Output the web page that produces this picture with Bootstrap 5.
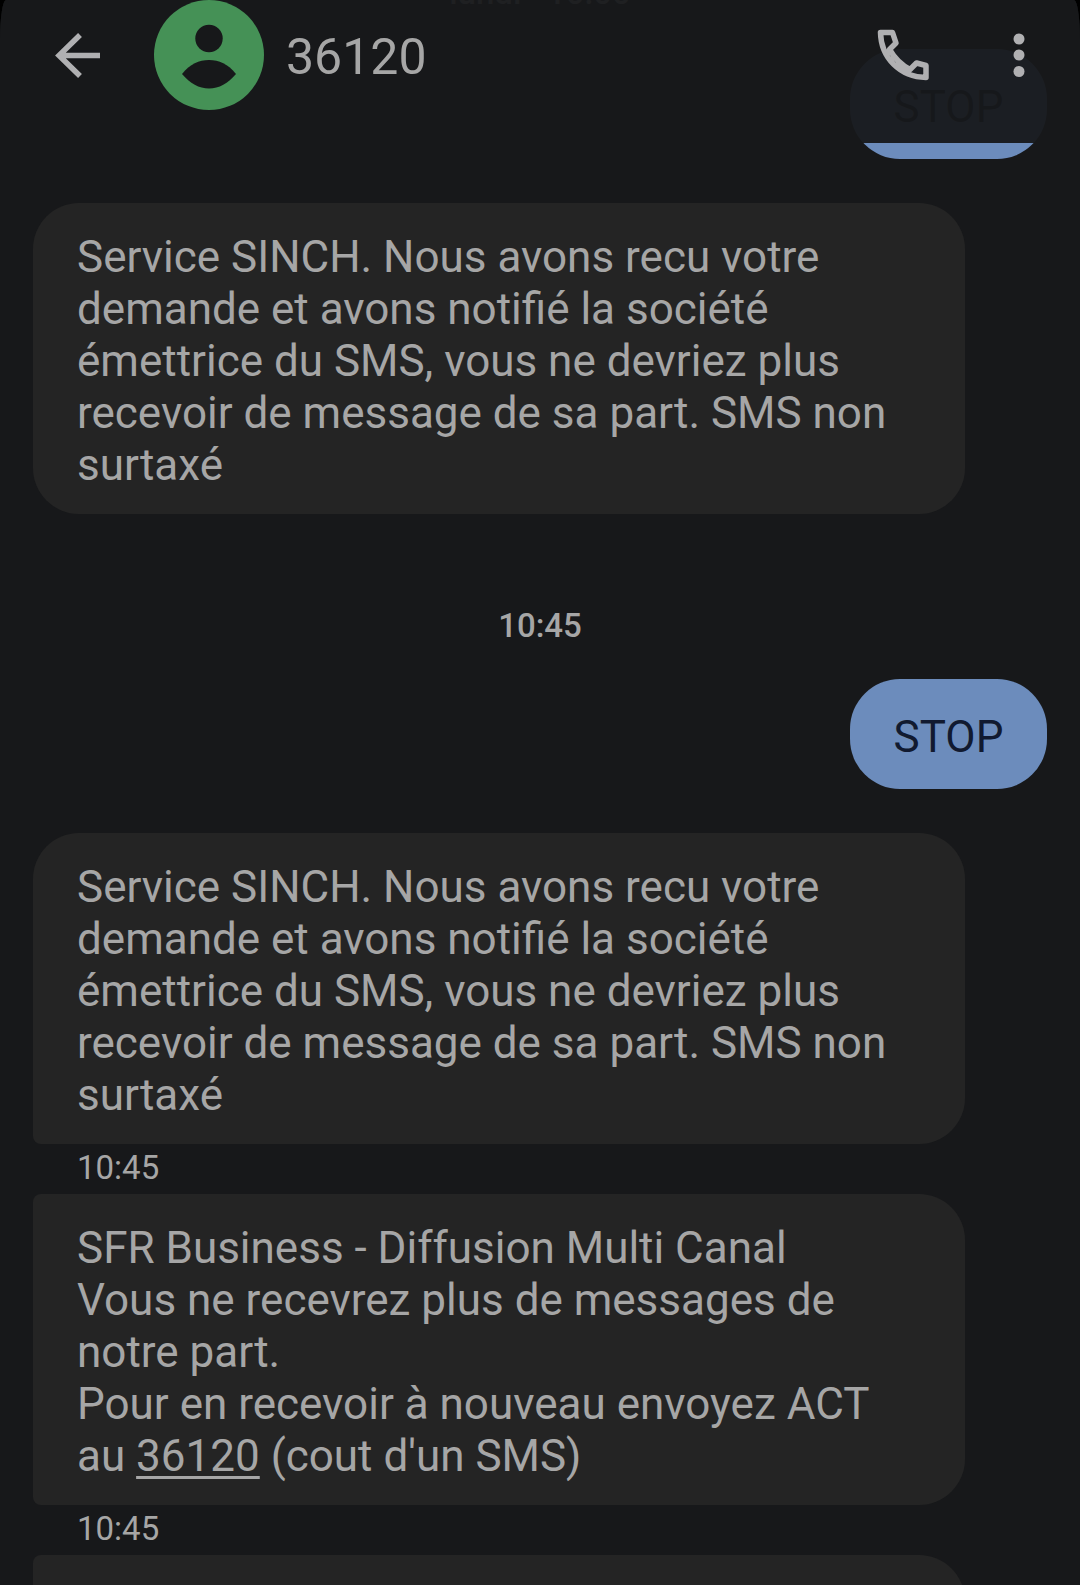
<!DOCTYPE html>
<html lang="fr">
<head>
<meta charset="utf-8">
<title>36120</title>
<link href="https://cdn.jsdelivr.net/npm/bootstrap@5.3.0/dist/css/bootstrap.min.css" rel="stylesheet">
<style>
html, body { height: 1585px; background: #000; overflow: hidden; }
body { font-family: Roboto, "Liberation Sans", sans-serif; color: #a6a6a6; }
.phone-screen { height: 1585px; background: #17181a; border-radius: 6px 6px 0 0 / 40px 40px 0 0; overflow: hidden; }
.top-bar { height: 143px; background: rgba(23,24,26,.95); z-index: 2; }
.back-icon { left: 55px; top: 33px; }
.avatar-icon { left: 154px; top: 0; }
.contact-name { left: 286px; top: 28px; font-size: 50px; line-height: 58px; }
.call-icon { left: 876px; top: 28px; }
.more-icon { left: 1012px; top: 32px; }
.date-line { font-size: 33px; line-height: 40px; margin-top: -27px; margin-bottom: 36px; font-weight: 500; }
.thread { padding: 0 33px 0 33px; }
.out-msg { background: #6c8cbc; color: #111a30; font-size: 44px; line-height: 52px; height: 110px; width: 197px; border-radius: 50px; padding-top: 5px; }
.in-msg { background: #242424; width: 932px; height: 310.5px; padding: 28px 44px; font-size: 44px; line-height: 52px; border-radius: 46px; }
.tail-bottom { border-bottom-left-radius: 8px; }
.tail-top { border-top-left-radius: 8px; }
.stamp-center { font-size: 33px; line-height: 40px; font-weight: 500; margin: 92.5px 0 33px; }
.stamp-left { font-size: 33px; line-height: 40px; padding: 4px 0 0 44px; height: 50.5px; }
.gap-after-out { margin-top: 44px; }
.in-msg u { text-underline-offset: 5px; text-decoration-thickness: 3px; }
</style>
</head>
<body>
<div class="phone-screen position-relative">
  <div class="top-bar position-absolute top-0 start-0 w-100">
    <svg class="back-icon position-absolute" width="46" height="46" viewBox="0 0 46 46" fill="none" stroke="#b0b0b2" stroke-width="5.500"><path d="M45 22.500H5M25 2 4 22.500 25 43"/></svg>
    <svg class="avatar-icon position-absolute" width="110" height="110" viewBox="0 0 110 110"><circle cx="55" cy="55" r="55" fill="#459156"/><circle cx="55" cy="38.500" r="13.700" fill="#17181a"/><path d="M28 74C36 64 45 60 55 60s19 4 27 14C74 83.500 65 88.500 55 88.500S36 83.500 28 74Z" fill="#17181a"/></svg>
    <div class="contact-name position-absolute">36120</div>
    <svg class="call-icon position-absolute" width="54" height="54" viewBox="0 0 54 54" fill="none" stroke="#b0b0b2" stroke-width="5.500" stroke-linejoin="round"><path d="M4.500 4.500H16.500L20 15 13.500 21.500C19 31 25 37 34 41.500L40.500 35 50 37.500V49.500C24 49 5 30 4.500 4.500Z"/></svg>
    <svg class="more-icon position-absolute" width="14" height="50" viewBox="0 0 14 50" fill="#b0b0b2"><circle cx="7" cy="7" r="5.500"/><circle cx="7" cy="23" r="5.500"/><circle cx="7" cy="39.500" r="5.500"/></svg>
  </div>
  <div class="thread d-flex flex-column">
    <div class="date-line text-center">lundi · 10:00</div>
    <div class="out-msg align-self-end d-flex align-items-center justify-content-center">STOP</div>
    <div class="in-msg gap-after-out">Service SINCH. Nous avons recu votre demande et avons notifié la société émettrice du SMS, vous ne devriez plus recevoir de message de sa part. SMS non surtaxé</div>
    <div class="stamp-center text-center">10:45</div>
    <div class="out-msg align-self-end d-flex align-items-center justify-content-center">STOP</div>
    <div class="in-msg tail-bottom gap-after-out">Service SINCH. Nous avons recu votre demande et avons notifié la société émettrice du SMS, vous ne devriez plus recevoir de message de sa part. SMS non surtaxé</div>
    <div class="stamp-left">10:45</div>
    <div class="in-msg tail-top tail-bottom">SFR Business - Diffusion Multi Canal<br>Vous ne recevrez plus de messages de notre part.<br>Pour en recevoir à nouveau envoyez ACT au <u>36120</u> (cout d'un SMS)</div>
    <div class="stamp-left">10:45</div>
    <div class="in-msg tail-top"></div>
  </div>
</div>
<script src="https://cdn.jsdelivr.net/npm/bootstrap@5.3.0/dist/js/bootstrap.bundle.min.js"></script>
</body>
</html>
